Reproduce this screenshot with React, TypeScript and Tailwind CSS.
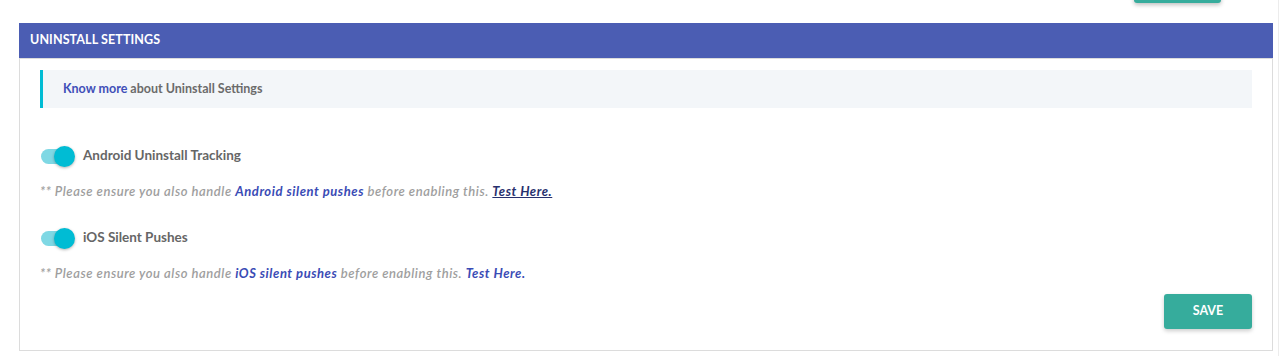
import React, { useState } from "react";

const font = { fontFamily: "Lato, 'Liberation Sans', sans-serif" };

const Toggle = ({ on, onClick }: { on: boolean; onClick: () => void }) => (
  <button type="button" onClick={onClick} className="relative w-[36px] h-[20px] shrink-0 cursor-pointer">
    <span className={`absolute left-[1px] top-[3px] w-[32px] h-[15px] rounded-full ${on ? "bg-[#7fd8e4]" : "bg-[#c9c9c9]"}`}></span>
    <span
      className={`absolute top-0 w-[21px] h-[21px] rounded-full shadow-[0_1px_3px_rgba(0,0,0,0.3)] ${on ? "left-[14px] bg-[#00bcd4]" : "left-0 bg-[#f1f1f1]"}`}
    ></span>
  </button>
);

const Setting = ({
  label,
  linkText,
  testClass,
}: {
  label: string;
  linkText: string;
  testClass: string;
}) => {
  const [on, setOn] = useState(true);
  return (
    <div className="flex flex-col">
      <div className="flex items-center gap-[7px] h-[21px]">
        <Toggle on={on} onClick={() => setOn(!on)} />
        <span className="text-[13.5px] font-bold text-[#666]">{label}</span>
      </div>
      <p className="mt-[16px] text-[13px] tracking-[0.55px] italic font-semibold text-[#9e9e9e] leading-[18px]">
        ** Please ensure you also handle{" "}
        <a href="#" className="text-[#3a4bb5] font-bold">{linkText}</a> before enabling this.{" "}
        <a href="#" className={testClass}>Test Here.</a>
      </p>
    </div>
  );
};

export default function App() {
  return (
    <div className="w-[1281px] h-[356px] bg-white relative overflow-hidden" style={font}>
      <div className="absolute left-[1134px] -top-[30px] w-[87px] h-[33px] rounded-[3px] bg-[#36ac9c] shadow-[0_2px_4px_rgba(0,0,0,0.25)]"></div>
      <div className="pt-[23px] pl-[19px] w-[1273px]">
        <div className="h-[35px] bg-[#4b5db3] flex items-center px-[11px]">
          <span className="text-white text-[12.5px] font-bold tracking-[0.1px]">UNINSTALL SETTINGS</span>
        </div>
        <div className="border border-[#dcdcdc] h-[293px] px-[20px] pt-[11px]">
          <div className="h-[38px] bg-[#f3f6f9] border-l-[3px] border-[#00bcd4] flex items-center pl-[20px]">
            <span className="text-[12.5px] font-bold text-[#6b6b6b]">
              <a href="#" className="text-[#3f4fb8]">Know more</a> about Uninstall Settings
            </span>
          </div>
          <div className="mt-[37px] flex flex-col gap-[27px]">
            <Setting label="Android Uninstall Tracking" linkText="Android silent pushes" testClass="text-[#27306e] font-bold underline" />
            <Setting label="iOS Silent Pushes" linkText="iOS silent pushes" testClass="text-[#3a4bb5] font-bold" />
          </div>
          <div className="flex justify-end mt-[12px]">
            <button className="w-[88px] h-[35px] rounded-[3px] bg-[#36ac9c] text-white text-[12.5px] font-bold shadow-[0_2px_4px_rgba(0,0,0,0.2)]">
              SAVE
            </button>
          </div>
        </div>
      </div>
      <div className="absolute top-0 right-[2px] w-px h-full bg-[#ececec]"></div>
    </div>
  );
}
